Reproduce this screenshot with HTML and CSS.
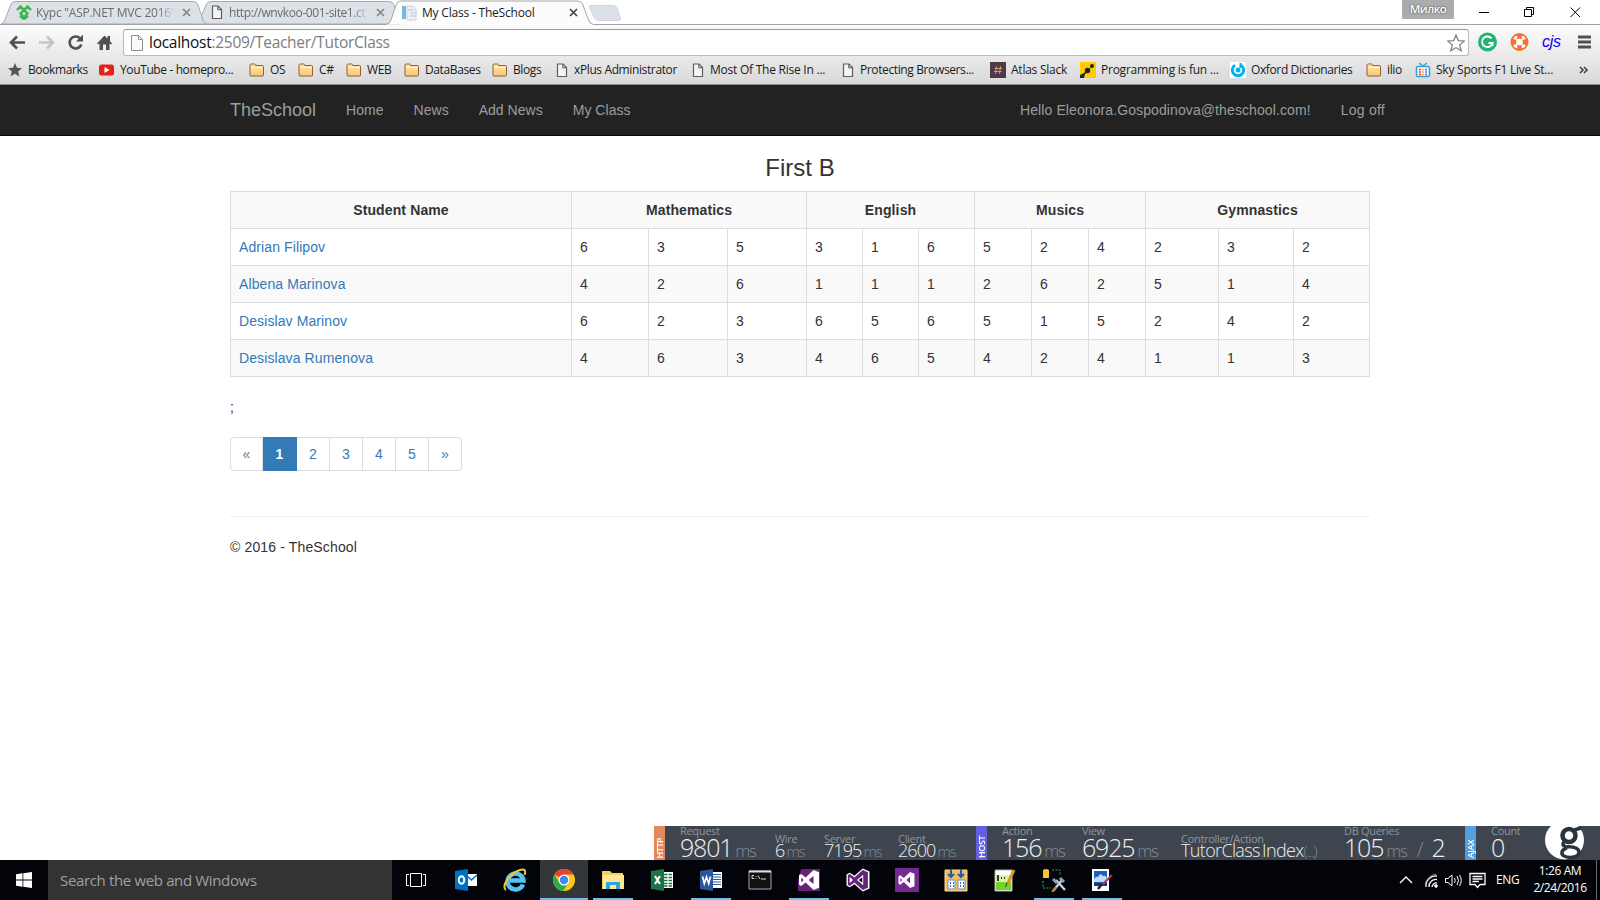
FILE: index.html
```html
<!DOCTYPE html>
<html lang="en">
<head>
<meta charset="utf-8">
<title>My Class - TheSchool</title>
<link rel="stylesheet" href="styles.css">
</head>
<body>
<svg class="defs" width="0" height="0">
  <defs>
    <linearGradient id="fold" x1="0" y1="0" x2="0" y2="1"><stop offset="0" stop-color="#ffe6b0"/><stop offset="1" stop-color="#f9c874"/></linearGradient>
    <symbol id="folder" viewBox="0 0 16 14"><path d="M1 12V2.200Q1 1 2.200 1H5.500Q6.500 1 6.700 2.500H13.500Q14.500 2.500 14.500 3.500V12Q14.500 13 13.500 13H2Q1 13 1 12Z" fill="url(#fold)" stroke="#8a6138"/><path d="M2 4.500H13.500" stroke="#fff3d2"/></symbol>
    <symbol id="page" viewBox="0 0 12 15"><path d="M1.500 1H7L10.500 4.500V13.500H1.500Z" fill="#f4f4f4" stroke="#5e5e5e" stroke-width="1.200"/><path d="M6.800 1V4.800H10.500" fill="none" stroke="#5e5e5e" stroke-width="1.100"/></symbol>
    <symbol id="cross" viewBox="0 0 9 9"><path d="M1 1L8 8M8 1L1 8" stroke="currentColor" stroke-width="1.700"/></symbol>
    <symbol id="vs" viewBox="0 0 20 20"><path fill-rule="evenodd" d="M14.500 0L20 2.300V17.700L14.500 20L6.600 12.500L2.300 16L0 14.800V5.200L2.300 4L6.600 7.500ZM14.500 6L9.700 10L14.500 14ZM2.300 7.500V12.500L4.700 10Z"/></symbol>
  </defs>
</svg>

<header class="chrome">
  <div class="tabstrip">
    <svg class="tabshapes" width="1600" height="25" viewBox="0 0 1600 25">
      <path d="M198 24L206 5Q207.500 1.500 211 1.500H389Q393 1.500 394 5L401 24Z" fill="#dce0e7" stroke="#a6a9ad"/>
      <path d="M1 24Q4 23.500 5 20L10.500 5Q12 1.500 15 1.500H193Q197 1.500 198 5L203 20Q204 23.500 207 24Z" fill="#dce0e7" stroke="#a6a9ad"/>
      <path d="M0 24.500H386Q389.500 24 391 20L396 5Q397.500 1 401 1H577Q581 1 582.500 4L588.500 20Q590 24 593.500 24.500H1600" fill="#fcfcfc" stroke="#a4a4a4"/>
      <path d="M590 5.500H613Q616 5.500 617 8L620.500 18Q621 20.500 618.500 20.500H599Q595.500 20.500 594.500 18L589.500 7.500Q589 5.500 591 5.500Z" fill="#dce0e7" stroke="#d0d4da"/>
    </svg>
    <div class="tab tab1">
      <svg width="16" height="15" viewBox="0 0 16 15"><path d="M1 5L4.500 1.500L11.500 8.500L8 12.500L4.500 8.500L11.500 1.500L15 5M4 11L8 14L12 11" fill="none" stroke="#3db54a" stroke-width="2.400"/></svg>
      <span class="tabtext fade">Курс "ASP.NET MVC 2016"</span>
      <svg class="close" width="9" height="9"><use href="#cross"/></svg>
    </div>
    <div class="tab tab2">
      <svg width="12" height="15"><use href="#page"/></svg>
      <span class="tabtext fade">http://wnvkoo-001-site1.ct</span>
      <svg class="close" width="9" height="9"><use href="#cross"/></svg>
    </div>
    <div class="tab tab3">
      <svg width="16" height="16" viewBox="0 0 16 16"><path d="M0 1H4V14H0Z" fill="#7db4dc"/><path d="M5 1H11L14 4V15H5Z" fill="#eef2f6" stroke="#c9d4de"/><path d="M6 5H12M8 8H15M8 11H14" stroke="#b5c4d0"/></svg>
      <span class="tabtext">My Class - TheSchool</span>
      <svg class="close dark" width="9" height="9"><use href="#cross"/></svg>
    </div>
    <div class="user">Милко</div>
    <svg class="winbtns" width="110" height="24" viewBox="0 0 110 24" fill="none" stroke="#000"><path d="M5 12.500H15M50.500 9.500H57.500V16.500H50.500ZM52.500 9.500V7.500H59.500V14.500H57.500"/><path d="M96.500 7.500L106 17M106 7.500L96.500 17"/></svg>
  </div>
  <div class="toolbar">
    <svg class="navicons" width="120" height="31" viewBox="0 0 120 31" fill="none">
      <path d="M25 17.500H11.500M17 11.500L11 17.500L17 23.500" stroke="#505050" stroke-width="2.600"/>
      <path d="M39 17.500H52.500M47 11.500L53 17.500L47 23.500" stroke="#c4c4c4" stroke-width="2.600"/>
      <path d="M80 13.300A6 6 0 1 0 81.300 19.500" stroke="#505050" stroke-width="2.600"/><path d="M83 9.500V16.500H76Z" fill="#505050"/>
      <path d="M97 18.500L104.500 10.500L107.500 13.500V11H110V16.200L112 18.500L111 19.500L109.500 18.500V25H106V19.500H103V25H99.500V18.500L98 19.500Z" fill="#505050"/>
    </svg>
    <div class="omnibox">
      <svg width="12" height="16" viewBox="0 0 12 16"><path d="M.5.500H7.500L11.500 4.500V15.500H.5Z" fill="#fafafa" stroke="#8f8f8f"/><path d="M7.500.500V4.500H11.500" fill="none" stroke="#8f8f8f"/></svg>
      <span class="url"><b>localhost</b>:2509/Teacher/TutorClass</span>
      <svg class="star" width="18" height="18" viewBox="0 0 18 18"><path d="M9 1L11.300 6.600L17.300 7L12.700 10.900L14.200 16.800L9 13.600L3.800 16.800L5.300 10.900L.7 7L6.700 6.600Z" fill="#fff" stroke="#7c7c7c" stroke-width="1.200"/></svg>
    </div>
    <svg class="ext" width="51" height="20" viewBox="0 0 51 20"><circle cx="9.500" cy="10" r="9.500" fill="#27b376"/><path d="M13.500 6.500A5.300 5.300 0 1 0 14.500 11H10.500M14.500 10.500V14" fill="none" stroke="#fff" stroke-width="1.800"/><circle cx="41.500" cy="10" r="9" fill="#f4722b"/><path d="M36 7L39 4.500M44 4.500L47 7M47 13L44 15.500M39 15.500L36 13" stroke="#fff" stroke-width="2.400"/><circle cx="41.500" cy="10" r="3.300" fill="#fff"/><path d="M38 6.500L45 13.500M45 6.500L38 13.500" stroke="#fff" stroke-width="1.200"/></svg>
    <span class="cjs">cjs</span>
    <svg class="menu" width="13" height="14" viewBox="0 0 13 14"><path d="M0 2H13M0 7H13M0 12H13" stroke="#505050" stroke-width="3"/></svg>
  </div>
  <nav class="bookmarks">
    <div class="bm"><svg width="14" height="14" viewBox="0 0 14 14"><path d="M7 0L9 4.800L14 5.200L10.200 8.500L11.400 13.500L7 10.800L2.600 13.500L3.800 8.500L0 5.200L5 4.800Z" fill="#555"/></svg><span>Bookmarks</span></div>
    <div class="bm"><svg width="15" height="12" viewBox="0 0 15 12"><rect y=".5" width="15" height="11" rx="2.500" fill="#e62117"/><path d="M5.500 3V9L10.500 6Z" fill="#fff"/></svg><span>YouTube - homepro...</span></div>
    <div class="bm"><svg width="16" height="14"><use href="#folder"/></svg><span>OS</span></div>
    <div class="bm"><svg width="16" height="14"><use href="#folder"/></svg><span>C#</span></div>
    <div class="bm"><svg width="16" height="14"><use href="#folder"/></svg><span>WEB</span></div>
    <div class="bm"><svg width="16" height="14"><use href="#folder"/></svg><span>DataBases</span></div>
    <div class="bm"><svg width="16" height="14"><use href="#folder"/></svg><span>Blogs</span></div>
    <div class="bm pg"><svg width="12" height="15"><use href="#page"/></svg><span>xPlus Administrator</span></div>
    <div class="bm pg"><svg width="12" height="15"><use href="#page"/></svg><span class="looser">Most Of The Rise In ...</span></div>
    <div class="bm pg"><svg width="12" height="15"><use href="#page"/></svg><span>Protecting Browsers...</span></div>
    <div class="bm"><svg width="16" height="16" viewBox="0 0 16 16"><rect width="16" height="16" fill="#4d394b"/><path d="M6.500 4L5.500 12M10.500 4L9.500 12M4.500 6.500H12M4 9.500H11.500" stroke="#c8a455"/></svg><span class="looser">Atlas Slack</span></div>
    <div class="bm"><svg width="16" height="16" viewBox="0 0 16 16"><rect width="16" height="16" fill="#fc0"/><circle cx="12" cy="4" r="2" fill="#222"/><circle cx="7.500" cy="8.500" r="2.700" fill="#222"/><path d="M12 4L7 9L3 11.500L0 13V16H4L5 12L8 10" fill="#222"/></svg><span class="looser">Programming is fun ...</span></div>
    <div class="bm"><svg width="16" height="16" viewBox="0 0 16 16"><rect width="16" height="16" fill="#fff"/><path d="M5 3.200A5.700 5.700 0 1 0 11 3.200" fill="none" stroke="#00b2ee" stroke-width="3"/><circle cx="8" cy="8" r="2.500" fill="#00b2ee"/><path d="M10.500 1V6" stroke="#00b2ee" stroke-width="2"/></svg><span>Oxford Dictionaries</span></div>
    <div class="bm"><svg width="16" height="14"><use href="#folder"/></svg><span>ilio</span></div>
    <div class="bm"><svg width="16" height="16" viewBox="0 0 16 16"><path d="M4 1L8 4L12 1" fill="none" stroke="#37a0d8" stroke-width="1.500"/><rect x="1.500" y="4.500" width="13" height="10" rx="1.500" fill="#fff" stroke="#37a0d8" stroke-width="1.600"/><path d="M4 7.500H6M4 10H6M4 12.500H6" stroke="#e33b32" stroke-width="1.700"/><path d="M7 7.500H9M7 10H9M7 12.500H9" stroke="#f4b32c" stroke-width="1.700"/><path d="M10 7.500H12M10 10H12M10 12.500H12" stroke="#4077c7" stroke-width="1.700"/></svg><span class="looser">Sky Sports F1 Live St...</span></div>
    <svg class="more" width="10" height="8" viewBox="0 0 10 8"><path d="M1 1L4 4L1 7M5 1L8 4L5 7" fill="none" stroke="#444" stroke-width="1.600"/></svg>
  </nav>
</header>

<div class="navbar">
  <div class="nav-inner">
    <a class="brand">TheSchool</a>
    <a>Home</a><a>News</a><a>Add News</a><a>My Class</a>
    <a class="hello">Hello Eleonora.Gospodinova@theschool.com!</a><a class="logoff">Log off</a>
  </div>
</div>

<main class="content">
  <h3>First B</h3>
  <table>
    <colgroup><col class="c341"><col class="c77"><col class="c79"><col class="c79"><col class="c56"><col class="c56"><col class="c56"><col class="c57"><col class="c57"><col class="c57"><col class="c73"><col class="c75"><col class="c76"></colgroup>
    <tr><th>Student Name</th><th colspan="3">Mathematics</th><th colspan="3">English</th><th colspan="3">Musics</th><th colspan="3">Gymnastics</th></tr>
    <tr><td><a>Adrian Filipov</a></td><td>6</td><td>3</td><td>5</td><td>3</td><td>1</td><td>6</td><td>5</td><td>2</td><td>4</td><td>2</td><td>3</td><td>2</td></tr>
    <tr><td><a>Albena Marinova</a></td><td>4</td><td>2</td><td>6</td><td>1</td><td>1</td><td>1</td><td>2</td><td>6</td><td>2</td><td>5</td><td>1</td><td>4</td></tr>
    <tr><td><a>Desislav Marinov</a></td><td>6</td><td>2</td><td>3</td><td>6</td><td>5</td><td>6</td><td>5</td><td>1</td><td>5</td><td>2</td><td>4</td><td>2</td></tr>
    <tr><td><a>Desislava Rumenova</a></td><td>4</td><td>6</td><td>3</td><td>4</td><td>6</td><td>5</td><td>4</td><td>2</td><td>4</td><td>1</td><td>1</td><td>3</td></tr>
  </table>
  <div class="semi">;</div>
  <div class="pagination"><span class="off">«</span><span class="on">1</span><span>2</span><span>3</span><span>4</span><span>5</span><span>»</span></div>
  <hr>
  <footer>© 2016 - TheSchool</footer>
</main>

<section class="glimpse">
  <div class="side http"><span>HTTP</span></div>
  <div class="g big gw95"><i>Request</i><p>9801<small>ms</small></p></div>
  <div class="g gw49"><i>Wire</i><p>6<small>ms</small></p></div>
  <div class="g gw74"><i>Server</i><p>7195<small>ms</small></p></div>
  <div class="g gw78"><i>Client</i><p>2600<small>ms</small></p></div>
  <div class="side host"><span>HOST</span></div>
  <div class="g big gw80"><i>Action</i><p>156<small>ms</small></p></div>
  <div class="g big gw99"><i>View</i><p>6925<small>ms</small></p></div>
  <div class="g gw163"><i>Controller/Action</i><p class="ctl">TutorClass<small class="dot">.</small>Index<small class="dot">(...)</small></p></div>
  <div class="g big gw121"><i>DB Queries</i><p>105<small>ms</small><small class="slash">/</small>2</p></div>
  <div class="side ajax"><span>AJAX</span></div>
  <div class="g big gw54"><i>Count</i><p>0</p></div>
  <svg width="40" height="34" viewBox="0 0 40 34"><circle cx="19.500" cy="14" r="19.500" fill="#fff"/><g fill="none" stroke="#2b333b"><circle cx="24" cy="9.500" r="6.500" stroke-width="4.500"/><path d="M29 4L36 2" stroke-width="3.500"/><path d="M19 16Q16 19 21 21Q33 20 34 26Q34 31 26 31.500Q16 31 17 26Q18 23 22 22" stroke-width="3.500"/></g></svg>
</section>

<section class="taskbar">
  <div class="start"><svg width="16" height="16" viewBox="0 0 16 16" fill="#fff"><path d="M0 2.200L6.500 1.300V7.500H0ZM7.300 1.200L16 0V7.500H7.300ZM0 8.400H6.500V14.700L0 13.800ZM7.300 8.400H16V16L7.300 14.800Z"/></svg></div>
  <div class="search">Search the web and Windows</div>
  <div class="app"><svg width="22" height="16" viewBox="0 0 22 16" fill="none" stroke="#fff"><path d="M5.500 1.500H16.500V14.500H5.500ZM4 2.500H1.500V13.500H4M18 2.500H20.500V13.500H18"/></svg></div>
  <div class="app"><svg width="24" height="24" viewBox="0 0 24 24"><path d="M12 6H23V18H12Z" fill="#fff"/><path d="M13 8L17.500 12L23 7" fill="none" stroke="#0072c6" stroke-width="1.600"/><path d="M1 3L14 1V23L1 21Z" fill="#0072c6"/><ellipse cx="7.500" cy="12" rx="2.800" ry="3.700" fill="none" stroke="#fff" stroke-width="2"/></svg></div>
  <div class="app"><svg width="24" height="24" viewBox="0 0 24 24" fill="none"><path d="M20 16.500A8 8 0 1 1 20.500 12.500H7" stroke="#56c2f4" stroke-width="4.500"/><path d="M3 22C-2 18 7 5 17 2Q24 0 21.500 7" stroke="#f8c62b" stroke-width="2"/></svg></div>
  <div class="app current"><svg width="24" height="24" viewBox="0 0 24 24"><circle cx="12" cy="12" r="11" fill="#fbc915"/><path d="M12 12L2.500 6.500A11 11 0 0 1 21.500 6.500H12Z" fill="#e14334"/><path d="M2.500 6.500A11 11 0 0 0 11 23L16.500 14.500L12 12L7.500 14.500Z" fill="#2da94f"/><circle cx="12" cy="12" r="5.500" fill="#fff"/><circle cx="12" cy="12" r="4.300" fill="#4587f3"/></svg></div>
  <div class="app open"><svg width="24" height="24" viewBox="0 0 24 24"><path d="M1 3H9L11 5H22V21H1Z" fill="#f2cf63"/><path d="M2 7H23V21H2Z" fill="#ffe793"/><path d="M5 21V14H19V21H15V17H9V21Z" fill="#29a8e8"/></svg></div>
  <div class="app"><svg width="24" height="24" viewBox="0 0 24 24"><path d="M12 4H23V20H12Z" fill="#fff"/><path d="M14 6.500H22M14 9.500H22M14 12.500H22M14 15.500H22M14 18H22" stroke="#1f7246" stroke-width="1.500"/><path d="M18 5V19" stroke="#fff"/><path d="M1 3L14 1V23L1 21Z" fill="#1f7246"/><path d="M5 8L10 16M10 8L5 16" stroke="#fff" stroke-width="2"/></svg></div>
  <div class="app open"><svg width="24" height="24" viewBox="0 0 24 24"><path d="M12 4H23V20H12Z" fill="#fff"/><path d="M14 6.500H22M14 9H22M14 11.500H22M14 14H22M14 16.500H22" stroke="#2b579a" stroke-width="1.200"/><path d="M1 3L14 1V23L1 21Z" fill="#2b579a"/><path d="M3.500 8.500L5.300 15.500L7.500 9L9.700 15.500L11.500 8.500" fill="none" stroke="#fff" stroke-width="1.700"/></svg></div>
  <div class="app"><svg width="24" height="24" viewBox="0 0 24 24"><path d="M1 3H23V21H1Z" fill="#111" stroke="#a6a6a6"/><path d="M1 3.500H23" stroke="#ddd" stroke-width="2"/><path d="M6 7.500H4V10.500H6M8 8V8.800M8 10V10.800M10 7.500L12 11M13 11H18" fill="none" stroke="#ddd"/></svg></div>
  <div class="app open"><svg width="24" height="24" viewBox="0 0 24 24"><path d="M4 1H23V23H1V12Z" fill="#68217a"/><svg x="2" y="2" width="20" height="20" fill="#fff"><use href="#vs"/></svg></svg></div>
  <div class="app"><svg width="24" height="24" viewBox="0 0 24 24"><svg x="0" y="0" width="24" height="24" viewBox="-1.500 -1.500 23 23" fill="#68217a" stroke="#fff" stroke-width="1.300"><path fill="#fff" fill-rule="evenodd" d="M14.500 -1L21 1.800V18.200L14.500 21L6.600 14L2.300 17L-1 15.200V4.800L2.300 3L6.600 6Z" stroke="none"/><path stroke="none" fill-rule="evenodd" d="M14.500 .3L19.500 2.600V17.400L14.500 19.700L6.600 12.300L2.300 15.700L.3 14.500V5.500L2.300 4.300L6.600 7.700Z"/><path fill="#fff" stroke="none" d="M15 5V15L9 10ZM2 7V13L5.200 10Z"/><path fill="#020409" stroke="none" d="M14 7.300V12.700L10.700 10Z"/></svg></svg></div>
  <div class="app"><svg width="24" height="24" viewBox="0 0 24 24"><path d="M0 0H24V24H0Z" fill="#742a90"/><svg x="3" y="4" width="17" height="16" fill="#fff"><use href="#vs"/></svg></svg></div>
  <div class="app"><svg width="24" height="24" viewBox="0 0 24 24"><path d="M1 2H23V23H1Z" fill="#f2bd68" stroke="#fbd999"/><path d="M7 1V8M17 1V8M4 6L7 9L10 6M14 6L17 9L20 6" fill="none" stroke="#255da2" stroke-width="2"/><path d="M4 12H11V21H4ZM14 12H21V21H14Z" fill="#fff" stroke="#718fba"/><path d="M6 15H7M9 15H10M6 18H7M9 18H10M16 15H17M19 15H20M16 18H17M19 18H20" stroke="#3b6db2" stroke-width="2"/></svg></div>
  <div class="app"><svg width="24" height="24" viewBox="0 0 24 24"><path d="M2 2H19V23H2Z" fill="#fff" stroke="#aaa"/><path d="M3 7H18V22H3Z" fill="#d8f5a0"/><path d="M3 14H18V22H3Z" fill="#72d32b"/><path d="M5 7V13M8 10H9M11 10H12" stroke="#333" stroke-width="2"/><path d="M21 2L14 17" stroke="#d59b20" stroke-width="3"/><path d="M14 15L12.500 19" stroke="#333"/></svg></div>
  <div class="app open"><svg width="24" height="24" viewBox="0 0 24 24" fill="none"><path d="M1 2Q4 0 7 2V10H1Z" fill="#f6c52c"/><path d="M10 2H18V8M1 13V20H9" stroke="#3dbb3d" stroke-dasharray="2 1.500"/><path d="M11 23L20 12M14 12L23 22" stroke="#c5d0dc" stroke-width="2.500"/><path d="M11 11L15 15M18 10L22 14" stroke="#8fa1b5" stroke-width="3"/><path d="M10 24L14 19" stroke="#c77a2c" stroke-width="2"/></svg></div>
  <div class="app open last"><svg width="24" height="24" viewBox="0 0 24 24"><path d="M2 1H19V23H2Z" fill="#fff"/><path d="M4 3H17V18H4Z" fill="#1d5fbd"/><path d="M4 12Q5 8 8 9Q10 4 13 8Q17 7 17 12V14H4Z" fill="#bfdbf5"/><path d="M4 15H17V18H4Z" fill="#153c8c"/><path d="M22 7L12 17" stroke="#b0343a" stroke-width="2"/><path d="M12 16L8 21" stroke="#222" stroke-width="2.500"/></svg></div>
  <svg class="tray" width="90" height="24" viewBox="0 0 90 24" fill="none" stroke="#fff"><path d="M2 15L8 9L14 15" stroke-width="1.400"/><path d="M28 19A10 10 0 0 1 39 8M31 19A7 7 0 0 1 39 11.500M34 19A4.500 4.500 0 0 1 39 15" stroke-width="1.300"/><path d="M27 16Q29 8 38 6" stroke="#888"/><circle cx="38" cy="18" r="1.300" fill="#fff"/><path d="M47.500 10.500H50L54 7V18L50 14.500H47.500ZM56.500 10Q58 12.500 56.500 15M59 8Q62 12.500 59 17M61.500 7Q65 12.500 61.500 18"/><path d="M72 5.500H87V16.500H82L79.500 19.500L77 16.500H72ZM74.500 8.500H84.500M74.500 11H84.500M74.500 13.500H81" stroke-width="1.300"/></svg>
  <div class="lang">ENG</div>
  <div class="clock">1:26 AM<br>2/24/2016</div>
</section>
</body>
</html>
```
FILE: styles.css
```css
* { box-sizing: border-box; }
body { margin: 0; width: 1600px; height: 900px; overflow: hidden; display: flex; flex-direction: column; background: #fff; font: 14px/20px "Liberation Sans", Arial, sans-serif; color: #333; }
svg { flex: none; display: block; }
.defs { position: absolute; }

/* browser window */
.chrome { height: 85px; flex: none; font-family: "Open Sans", "Noto Sans", sans-serif; font-size: 12px; background: linear-gradient(#fff 0, #fcfcfc 25px, #d9d9d9 84px); border-bottom: 1px solid #8d8d8d; }
.tabstrip { height: 25px; display: flex; position: relative; background: #fff; }
.tabshapes { position: absolute; left: 0; top: 0; }
.tab { position: relative; display: flex; align-items: center; height: 25px; }
.tab1 { width: 196px; padding-left: 16px; }
.tab2 { width: 190px; padding-left: 15px; }
.tab3 { width: 196px; padding-left: 16px; }
.tabtext { margin-left: 4px; width: 139px; white-space: nowrap; overflow: hidden; letter-spacing: -.25px; color: #222; }
.tab2 .tabtext { margin-left: 6px; width: 140px; letter-spacing: -.4px; }
.tab3 .tabtext { letter-spacing: -.2px; }
.fade { color: #6b6b6b; -webkit-mask-image: linear-gradient(90deg, #000 88%, transparent); mask-image: linear-gradient(90deg, #000 88%, transparent); }
.close { color: #858585; margin-left: 7px; }
.tab3 .close { margin-left: 8px; }
.dark { color: #444; }
.user { position: relative; margin-left: auto; width: 52px; height: 19px; line-height: 18px; text-align: center; background: #acacac; color: #fff; font-size: 11.500px; font-weight: 600; letter-spacing: -.5px; text-shadow: 0 0 2px #333; }
.winbtns { position: relative; margin-left: 20px; margin-right: 16px; }
.toolbar { height: 31px; display: flex; align-items: center; }
.omnibox { margin-left: 3px; margin-top: 4px; width: 1346px; height: 27px; border: 1px solid #b9b9b9; border-top-color: #989898; border-radius: 3px; background: #fff; display: flex; align-items: center; padding-left: 7px; }
.url { margin: -1px 0 0 6px; font-size: 15.500px; letter-spacing: -.28px; color: #7d7d7d; }
.url b { font-weight: 400; color: #111; }
.star { margin-left: auto; margin-right: 3px; }
.ext { margin: 3px 0 0 9px; }
.cjs { margin: 2px 0 0 13px; width: 36px; font: italic 16px "Liberation Sans", Arial, sans-serif; letter-spacing: -.3px; color: #10e; }
.menu { margin-top: 3px; }
.bookmarks { height: 28px; padding-left: 8px; display: grid; grid-template-columns: 91px 150px 49px 48px 58px 88px 64px 136px 150px 148px 90px 150px 136px 49px 165px 20px; align-items: center; }
.bm { display: flex; align-items: center; gap: 5px; white-space: nowrap; color: #1b1b1b; letter-spacing: -.38px; }
.bm:nth-child(-n+2) { gap: 6px; }
.bm .looser { letter-spacing: -.24px; }
.pg { gap: 6px; }
.more { margin-left: -1px; }

/* site */
.navbar { height: 51px; flex: none; background: #222; border-bottom: 1px solid #080808; padding-left: 215px; }
.nav-inner { width: 1185px; display: flex; }
.nav-inner a { padding: 15px; color: #9d9d9d; letter-spacing: .03px; }
.nav-inner .brand { font-size: 18px; letter-spacing: 0; }
.nav-inner .hello { margin-left: auto; letter-spacing: .1px; }
.nav-inner .logoff { letter-spacing: .25px; }
.content { width: 1140px; margin: 0 auto 0 230px; flex: 1; }
h3 { margin: 19px 0 10px; height: 26px; font-size: 24px; line-height: 26px; font-weight: 500; text-align: center; }
table { width: 1140px; border-collapse: collapse; table-layout: fixed; }
th, td { border: 1px solid #ddd; padding: 8px; height: 37px; line-height: 20px; }
th { letter-spacing: .12px; }
tr:nth-child(odd) { background: #f9f9f9; }
td a, .pagination span { color: #337ab7; }
td a { letter-spacing: .1px; }
.c341 { width: 341px; } .c77 { width: 77px; } .c79 { width: 79px; } .c56 { width: 56px; } .c57 { width: 57px; } .c73 { width: 73px; } .c75 { width: 75px; } .c76 { width: 76px; }
.semi { margin-top: 20px; height: 20px; }
.pagination { margin-top: 20px; display: flex; height: 34px; }
.pagination span { width: 33px; border: 1px solid #ddd; border-left-width: 0; text-align: center; line-height: 32px; }
.pagination .off { color: #777; border-left-width: 1px; border-radius: 4px 0 0 4px; }
.pagination .on { width: 34px; background: #337ab7; border-color: #337ab7; color: #fff; font-weight: 700; }
.pagination span:last-child { border-radius: 0 4px 4px 0; }
hr { margin: 45px 0 20px; border: 0; border-top: 1px solid #eee; }
footer { letter-spacing: .14px; }

/* performance bar */
.glimpse { flex: none; margin-left: 654px; height: 34px; overflow: hidden; display: flex; background: #3e454f; color: #f0f0f0; font-family: "Open Sans", "Noto Sans", sans-serif; font-weight: 300; }
.side { width: 11px; flex: none; margin-right: 15px; display: flex; align-items: flex-end; justify-content: center; color: #fff; }
.side span { writing-mode: vertical-rl; transform: rotate(180deg); font: 600 9px/11px "Open Sans", sans-serif; letter-spacing: -.5px; margin-bottom: 2px; }
.http { background: #e2875e; } .host { background: #6161e0; } .ajax { background: #559fdf; }
.g { flex: none; white-space: nowrap; padding-top: 8px; }
.g i { display: block; font-style: normal; font-weight: 400; font-size: 11px; line-height: 10px; color: #8f959d; letter-spacing: -.3px; }
.g p { margin: 0; font-size: 18px; line-height: 12px; letter-spacing: -.9px; }
.g small { font-size: 15px; color: #858b93; margin-left: 2px; letter-spacing: -1.200px; }
.g .ctl { letter-spacing: -.65px; }
.big { padding-top: 0; }
.big p { font-size: 25px; line-height: 22px; letter-spacing: -1.200px; }
.big small { font-size: 17px; margin-left: 3px; letter-spacing: -1.200px; }
.g .dot { margin-left: 0; }
.big .slash { margin: 0 9px 0 10px; font-size: 20px; }
.gw95 { width: 95px; } .gw49 { width: 49px; } .gw74 { width: 74px; } .gw78 { width: 78px; } .gw80 { width: 80px; } .gw99 { width: 99px; } .gw163 { width: 163px; } .gw121 { width: 121px; } .gw54 { width: 54px; }

/* desktop taskbar */
.taskbar { flex: none; height: 40px; background: #020409; display: flex; align-items: center; color: #fff; font-family: "Open Sans", "Noto Sans", sans-serif; font-size: 12px; }
.start { width: 48px; padding-left: 16px; }
.search { width: 344px; height: 40px; background: #333; color: #a0a0a0; font-size: 15px; line-height: 40px; padding-left: 12px; letter-spacing: -.35px; }
.app { width: 40px; height: 40px; margin-right: 9px; flex: none; display: flex; align-items: center; justify-content: center; }
.search + .app { margin-left: 4px; width: 40px; margin-right: 10px; }
.open { border-bottom: 2px solid #76b9ed; padding-top: 2px; }
.current { width: 48px; margin: 0 5px 0 -4px; background: #34373a; border-bottom: 2px solid #76b9ed; padding-top: 2px; }
.last { margin-left: -1px; }
.tray { margin-left: auto; }
.lang { margin-left: 8px; width: 27px; letter-spacing: -.4px; }
.clock { width: 74px; height: 40px; margin-right: 3px; border-right: 1px solid #666; text-align: center; line-height: 17px; padding: 2px 0 0 1px; letter-spacing: -.4px; }
```
